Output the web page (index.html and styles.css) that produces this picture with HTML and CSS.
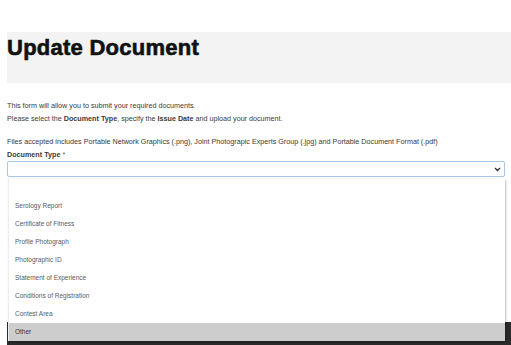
FILE: index.html
```html
<!DOCTYPE html>
<html lang="en">
<head>
    <meta charset="UTF-8">
    <meta name="viewport" content="width=device-width, initial-scale=1.0">
    <title>Update Document</title>
    <link rel="stylesheet" href="styles.css">
</head>
<body>
    <div class="page">
        <div class="title-band">
            <h1>Update Document</h1>
        </div>

        <div class="content">
            <p class="intro">This form will allow you to submit your required documents.</p>
            <p class="intro">Please select the <b>Document Type</b>, specify the <b>Issue Date</b> and upload your document.</p>
            <p class="files">Files accepted includes Portable Network Graphics (.png), Joint Photograpic Experts Group (.jpg) and Portable Document Format (.pdf)</p>

            <div class="form-group">
                <label for="doc-type">Document Type <span class="req">*</span></label>
                <div class="select-wrap">
                    <div class="select-box" id="doc-type">
                        <svg class="chevron" width="7" height="5" viewBox="0 0 7 5">
                            <path d="M1 1 L3.5 3.5 L6 1" fill="none" stroke="#333" stroke-width="1.4"/>
                        </svg>
                    </div>
                    <ul class="options">
                        <li>&nbsp;</li>
                        <li>Serology Report</li>
                        <li>Certificate of Fitness</li>
                        <li>Profile Photograph</li>
                        <li>Photographic ID</li>
                        <li>Statement of Experience</li>
                        <li>Conditions of Registration</li>
                        <li>Contest Area</li>
                        <li class="active">Other</li>
                    </ul>
                </div>
            </div>
        </div>

        <div class="footer"></div>
    </div>
</body>
</html>
```

FILE: styles.css
```css
body {
    margin: 0;
    font-family: "Liberation Sans", Arial, sans-serif;
    color: #3a3a3a;
    background: #fff;
}
.page {
    padding-left: 7px;
}
.title-band {
    margin-top: 32px;
    height: 51px;
    background-color: #f3f3f3;
}
h1 {
    margin: 0;
    padding-top: 3px;
    font-size: 22px;
    font-weight: bold;
    color: #111;
    letter-spacing: 0.25px;
    -webkit-text-stroke: 0.6px #111;
}
.content {
    padding-right: 6px;
    padding-top: 16px;
    height: 223px;
}
p {
    margin: 0;
    font-size: 7.2px;
    line-height: 13px;
}
.files {
    margin-top: 10px;
}
.form-group {
    margin-top: 1px;
}
label {
    display: block;
    font-size: 7.2px;
    font-weight: bold;
    line-height: 12px;
}
.req {
    font-weight: normal;
    color: #666;
}
.select-wrap {
    position: relative;
}
.select-box {
    height: 14px;
    border: 1px solid #a9c7e6;
    border-radius: 2px;
    position: relative;
}
.chevron {
    position: absolute;
    right: 3px;
    top: 5px;
}
.options {
    position: absolute;
    left: 1px;
    right: 0;
    top: 18px;
    margin: 0;
    padding: 0;
    list-style: none;
    background: #fff;
    border-left: 1px solid #ececec;
    box-shadow: 1px 1px 2px rgba(0, 0, 0, 0.25);
    z-index: 2;
}
.options li {
    height: 18px;
    line-height: 18px;
    padding-left: 6px;
    font-size: 6.5px;
    color: #5a5a5a;
}
.options li.active {
    background-color: #cdcdcd;
    color: #333;
}
.footer {
    height: 23px;
    background-color: #2a2a2a;
}
```
